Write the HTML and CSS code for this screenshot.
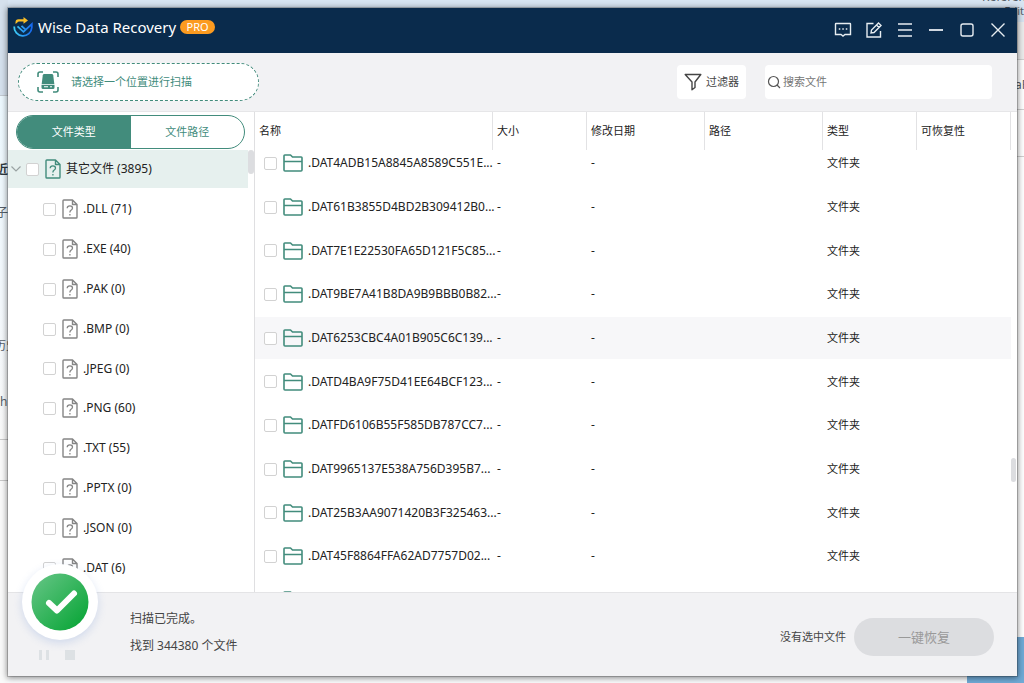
FILE: index.html
```html
<!DOCTYPE html>
<html lang="zh-CN">
<head>
<meta charset="utf-8">
<title>Wise Data Recovery</title>
<link rel="stylesheet" href="styles.css">
</head>
<body>
<svg class="defs" aria-hidden="true">
  <symbol id="folder" viewBox="0 0 20 18"><path d="M1 16V1.8Q1 1 1.8 1H7.5L9.5 3H18.2Q19 3 19 3.8V16Q19 17 18 17H2Q1 17 1 16ZM1 7.5H19" fill="none" stroke="currentColor" stroke-width="1.6" stroke-linejoin="round"/></symbol>
  <symbol id="file" viewBox="0 0 16 20"><path d="M1.8 1H10.5L15 5.5V18.2Q15 19 14.2 19H1.8Q1 19 1 18.2V1.8Q1 1 1.8 1ZM10.5 1V5.5H15" fill="none" stroke="currentColor" stroke-width="1.4" stroke-linejoin="round"/><path d="M5.2 9.2Q5.2 6.9 7.9 6.9Q10.5 6.9 10.5 9.1Q10.5 10.5 9 11.3Q7.9 12 7.9 13.4M7.9 15V16.4" fill="none" stroke="currentColor" stroke-width="1.3"/></symbol>
</svg>
<div class="desktop" aria-hidden="true">
  <div class="page-left"></div>
  <div class="page-right"></div>
  <div class="blue-tile"></div>
  <span class="peek peek-a">近</span>
  <span class="peek peek-b">子</span>
  <span class="peek peek-c">历史</span>
  <span class="peek peek-d">h</span>
  <span class="peek peek-e">References</span>
  <span class="peek peek-f">Edit</span>
  <span class="peek peek-g">aF</span>
</div>
<main class="window">
  <header class="titlebar">
    <svg class="logo" viewBox="0 0 20 20" width="20" height="20"><defs><linearGradient id="lg"><stop stop-color="#3fd0f7"/><stop offset="1" stop-color="#1668ed"/></linearGradient></defs><path d="M1.200 9.500A8.800 8.800 0 0 0 18.800 10.500V7L10.500 14.800L4.500 9.300M8.500 8.800L12.300 12.300" fill="none" stroke="url(#lg)" stroke-width="1.800"/><path d="M2.500 7V5.200Q2.500 2.200 5.500 2.200H10.500V0L15 3.400L10.500 6.800V4.600H6.200Q4.700 4.600 4.400 5.600Z" fill="#f8bd26"/></svg>
    <h1>Wise Data Recovery</h1><span class="badge">PRO</span>
    <div class="controls">
      <button aria-label="反馈"><svg viewBox="0 0 18 18"><path d="M2 2.5H16Q16.5 2.5 16.5 3V13.5H11L9 15L7 13.5H1.5V3Q1.5 2.5 2 2.5Z"/><path d="M4.8 8H6.3M8.3 8H9.8M11.8 8H13.3" stroke-width="1.6"/></svg></button>
      <button aria-label="注册"><svg viewBox="0 0 18 18"><path d="M8.5 2.5H2V16H15.5V10"/><path d="M6 12L6.5 9L13.5 2L16 4.5L9 11.5ZM11.5 4L14 6.5"/></svg></button>
      <button aria-label="菜单"><svg viewBox="0 0 18 18"><path d="M2 3H16M2 9H16M2 15H16"/></svg></button>
      <button aria-label="最小化"><svg viewBox="0 0 18 18"><path d="M2 9H16" stroke-width="1.8"/></svg></button>
      <button aria-label="最大化"><svg viewBox="0 0 18 18"><rect x="3" y="3" width="12" height="12" rx="2"/></svg></button>
      <button aria-label="关闭"><svg viewBox="0 0 18 18"><path d="M2.5 2.5L15.5 15.5M15.5 2.5L2.5 15.5"/></svg></button>
    </div>
  </header>
  <div class="toolbar">
    <button class="scan"><svg viewBox="0 0 22 22" width="22" height="22"><path d="M1 6V3Q1 1 3 1H6M16 1H19Q21 1 21 3V6M21 16V19Q21 21 19 21H16M6 21H3Q1 21 1 19V16" fill="none" stroke="currentColor" stroke-width="1.6"/><path d="M7.3 3H14.7Q16 3 16.2 4.2L17.3 13H4.7L5.8 4.2Q6 3 7.3 3Z" fill="currentColor"/><path fill-rule="evenodd" d="M4.500 13.700H17.500V16.500Q17.500 18 16 18H6Q4.500 18 4.500 16.500ZM7 15.300H11V16.300H7ZM13 15.300H15V16.300H13Z" fill="currentColor"/></svg>请选择一个位置进行扫描</button>
    <div class="tools">
      <button class="filter"><svg viewBox="0 0 18 18" width="18" height="18"><path d="M1.200 1.500H16.800L11 9V14.500L8 16.800V9Z" fill="none" stroke="#454545" stroke-width="1.400" stroke-linejoin="round"/></svg>过滤器</button>
      <label class="search"><svg viewBox="0 0 14 14" width="14" height="14"><circle cx="6.500" cy="6.500" r="5" fill="none" stroke="#555" stroke-width="1.200"/><path d="M10 10L13 13" stroke="#555" stroke-width="1.200"/></svg><input type="text" placeholder="搜索文件" aria-label="搜索文件"></label>
    </div>
  </div>
  <div class="content">
    <aside class="sidebar">
      <div class="tabs"><button class="active">文件类型</button><button>文件路径</button></div>
      <div class="tree-wrap">
      <ul class="tree">
        <li class="root"><svg class="chevron" viewBox="0 0 10 6" width="10" height="6"><path d="M.5 .5L5 5L9.500 .5" fill="none" stroke="#9aa3a3" stroke-width="1.200"/></svg><label><input type="checkbox"><svg class="file"><use href="#file"/></svg>其它文件 (3895)</label></li>
        <li><label><input type="checkbox"><svg class="file"><use href="#file"/></svg>.DLL (71)</label></li>
        <li><label><input type="checkbox"><svg class="file"><use href="#file"/></svg>.EXE (40)</label></li>
        <li><label><input type="checkbox"><svg class="file"><use href="#file"/></svg>.PAK (0)</label></li>
        <li><label><input type="checkbox"><svg class="file"><use href="#file"/></svg>.BMP (0)</label></li>
        <li><label><input type="checkbox"><svg class="file"><use href="#file"/></svg>.JPEG (0)</label></li>
        <li><label><input type="checkbox"><svg class="file"><use href="#file"/></svg>.PNG (60)</label></li>
        <li><label><input type="checkbox"><svg class="file"><use href="#file"/></svg>.TXT (55)</label></li>
        <li><label><input type="checkbox"><svg class="file"><use href="#file"/></svg>.PPTX (0)</label></li>
        <li><label><input type="checkbox"><svg class="file"><use href="#file"/></svg>.JSON (0)</label></li>
        <li><label><input type="checkbox"><svg class="file"><use href="#file"/></svg>.DAT (6)</label></li>
      </ul>
      <div class="thumb-left"></div>
      </div>
    </aside>
    <section class="files">
      <table>
        <colgroup><col><col class="c-size"><col class="c-date"><col class="c-path"><col class="c-type"><col class="c-state"></colgroup>
        <thead><tr><th>名称</th><th>大小</th><th>修改日期</th><th>路径</th><th>类型</th><th>可恢复性</th></tr></thead>
        <tbody>
          <tr><td><label><input type="checkbox"><svg class="folder"><use href="#folder"/></svg>.DAT4ADB15A8845A8589C551E...</label></td><td>-</td><td>-</td><td></td><td>文件夹</td><td></td></tr>
          <tr><td><label><input type="checkbox"><svg class="folder"><use href="#folder"/></svg>.DAT61B3855D4BD2B309412B0...</label></td><td>-</td><td>-</td><td></td><td>文件夹</td><td></td></tr>
          <tr><td><label><input type="checkbox"><svg class="folder"><use href="#folder"/></svg>.DAT7E1E22530FA65D121F5C85...</label></td><td>-</td><td>-</td><td></td><td>文件夹</td><td></td></tr>
          <tr><td><label><input type="checkbox"><svg class="folder"><use href="#folder"/></svg>.DAT9BE7A41B8DA9B9BBB0B82...</label></td><td>-</td><td>-</td><td></td><td>文件夹</td><td></td></tr>
          <tr class="hover"><td><label><input type="checkbox"><svg class="folder"><use href="#folder"/></svg>.DAT6253CBC4A01B905C6C139...</label></td><td>-</td><td>-</td><td></td><td>文件夹</td><td></td></tr>
          <tr><td><label><input type="checkbox"><svg class="folder"><use href="#folder"/></svg>.DATD4BA9F75D41EE64BCF123...</label></td><td>-</td><td>-</td><td></td><td>文件夹</td><td></td></tr>
          <tr><td><label><input type="checkbox"><svg class="folder"><use href="#folder"/></svg>.DATFD6106B55F585DB787CC7...</label></td><td>-</td><td>-</td><td></td><td>文件夹</td><td></td></tr>
          <tr><td><label><input type="checkbox"><svg class="folder"><use href="#folder"/></svg>.DAT9965137E538A756D395B7...</label></td><td>-</td><td>-</td><td></td><td>文件夹</td><td></td></tr>
          <tr><td><label><input type="checkbox"><svg class="folder"><use href="#folder"/></svg>.DAT25B3AA9071420B3F325463...</label></td><td>-</td><td>-</td><td></td><td>文件夹</td><td></td></tr>
          <tr><td><label><input type="checkbox"><svg class="folder"><use href="#folder"/></svg>.DAT45F8864FFA62AD7757D02...</label></td><td>-</td><td>-</td><td></td><td>文件夹</td><td></td></tr>
          <tr><td><label><input type="checkbox" aria-label="文件夹"><svg class="folder"><use href="#folder"/></svg></label></td><td></td><td></td><td></td><td></td><td></td></tr>
        </tbody>
      </table>
      <div class="thumb-right"></div>
    </section>
  </div>
  <footer class="status">
    <div class="done"><svg viewBox="0 0 58 58" width="58" height="58"><defs><linearGradient id="gg" x1="0" y1="0" x2="1" y2="1"><stop stop-color="#68c688"/><stop offset="1" stop-color="#02a331"/></linearGradient></defs><circle cx="29" cy="29" r="28.500" fill="url(#gg)"/><path d="M18 30L26 37.500L43 20.500" fill="none" stroke="#fff" stroke-width="6" stroke-linecap="round" stroke-linejoin="round"/></svg></div>
    <div class="scan-controls">
      <button aria-label="暂停" disabled><svg viewBox="0 0 10 10" width="10" height="10"><path d="M0 0H3V10H0ZM7 0H10V10H7Z" fill="#dde1e4"/></svg></button>
      <button aria-label="停止" disabled><svg viewBox="0 0 10 10" width="10" height="10"><path d="M0 0H10V10H0Z" fill="#dde1e4"/></svg></button>
    </div>
    <div class="summary"><p>扫描已完成。</p><p>找到 344380 个文件</p></div>
    <div class="recover"><span>没有选中文件</span><button disabled>一键恢复</button></div>
  </footer>
</main>
</body>
</html>
```
FILE: styles.css
```css
* { box-sizing: border-box; }
body {
  margin: 0;
  height: 100vh;
  padding: 8px 7px 7px 8px;
  overflow: hidden;
  background: #fafbfc;
  color: #222;
  font: 12px/16px "Noto Sans", "Noto Sans CJK SC", sans-serif;
}
button { border: 0; padding: 0; background: none; color: inherit; font: inherit; }
input[type="checkbox"] {
  appearance: none;
  flex: none;
  width: 13px;
  height: 13px;
  margin: 0;
  border: 1px solid #d2d2d2;
  border-radius: 2px;
  background: #fff;
}
.defs { position: absolute; width: 0; height: 0; }

/* desktop behind the window */
.desktop {
  position: absolute;
  inset: 0;
  overflow: hidden;
  background: linear-gradient(#d8e5f2 22px, #fafbfc 22px);
}
.page-left {
  position: absolute;
  left: 0; top: 0; bottom: 0;
  width: 8px;
  background: linear-gradient(#d5e1ed 95px, #c3cad1 95px 96px, #edf9ff 96px, #f4f9fd 300px, #fafafa 439px, #c9c9c9 439px 440px, #fafafa 440px 480px, #c9c9c9 480px 481px, #fafafa 481px);
}
.page-right {
  position: absolute;
  right: 0; top: 22px; bottom: 0;
  width: 7px;
  background: linear-gradient(#ececec 37px, #d0d0d0 37px 38px, #fff 38px 87px, #d0d0d0 87px 88px, #fff 88px 134px, #d0d0d0 134px 135px, #fff 135px);
}
.blue-tile {
  position: absolute;
  right: 0; bottom: 0;
  width: 57px;
  height: 46px;
  background: #70aad6;
}
.peek { position: absolute; white-space: nowrap; color: #555e68; }
.peek-a { left: -4px; top: 162px; font-weight: bold; color: #303840; }
.peek-b { left: -4px; top: 205px; }
.peek-c { left: -6px; top: 338px; }
.peek-d { left: 0; top: 394px; }
.peek-e { left: 982px; top: -11px; }
.peek-f { right: 0; top: 3px; font-size: 11px; }
.peek-g { left: calc(100% - 9px); top: 77px; }

.window {
  position: relative;
  display: flex;
  flex-direction: column;
  height: 100%;
  background: #fff;
  box-shadow: 0 0 0 1px rgba(0, 0, 0, .18), 0 1px 6px 1px rgba(0, 0, 0, .45);
}
.titlebar {
  display: flex;
  flex: none;
  height: 45px;
  padding: 0 4px 8px 5px;
  align-items: center;
  background: #0a2b4c;
  color: #fff;
}
.titlebar h1 { margin: 0 4px 0 5px; font-size: 15px; line-height: 20px; font-weight: 400; }
.badge {
  width: 35px;
  height: 14px;
  border-radius: 7px;
  background: #fc9b20;
  text-align: center;
  font-size: 11px;
  line-height: 14px;
}
.controls { display: flex; margin-left: auto; padding-top: 7px; }
.controls button { width: 31px; height: 18px; }
.controls svg { display: block; width: 18px; height: 18px; margin: auto; fill: none; stroke: #e7edf1; stroke-width: 1.4; }

.toolbar {
  display: flex;
  flex: none;
  justify-content: space-between;
  align-items: center;
  height: 59px;
  padding: 0 25px 0 10px;
  border-bottom: 1px solid #e6e6e8;
  background: #f2f2f4;
  font-size: 11px;
}
.scan {
  display: flex;
  align-items: center;
  gap: 12px;
  width: 241px;
  height: 38px;
  padding-left: 18px;
  border: 1px dashed #428c7c;
  border-radius: 19px;
  background: #fff;
  color: #428c7c;
}
.tools { display: flex; gap: 19px; }
.filter, .search { display: flex; align-items: center; height: 34px; border-radius: 4px; background: #fff; }
.filter { width: 69px; padding-left: 7px; gap: 4px; color: #444; }
.search { width: 227px; padding-left: 2px; gap: 2px; }
.search input { flex: 1; min-width: 0; padding: 0; border: 0; outline: 0; background: none; font: inherit; }
.search input::placeholder { color: #757575; }

.content { display: flex; flex: 1; min-height: 0; }
.sidebar {
  display: flex;
  flex-direction: column;
  flex: none;
  width: 247px;
  border-right: 1px solid #dfdfe1;
}
.tabs {
  display: flex;
  flex: none;
  height: 34px;
  margin: 3px 9px 1px 8px;
  overflow: hidden;
  border: 1px solid #428c7c;
  border-radius: 17px;
  color: #428c7c;
  font-size: 11px;
}
.tabs button { flex: 1; }
.tabs .active { background: #428c7c; color: #fff; }
.tree-wrap { position: relative; flex: 1; min-height: 0; overflow: hidden; }
.tree { margin: 0; padding: 0; list-style: none; }
.tree li { display: flex; align-items: center; height: 40px; padding-left: 35px; }
.tree li:nth-child(6n) { height: 39px; }
.tree label { display: flex; align-items: center; }
.tree .root {
  height: 38px;
  margin: 0 6px 1px 0;
  padding-left: 3px;
  gap: 5px;
  background: #e6f0ee;
}
.file { flex: none; width: 16px; height: 20px; margin: 0 5px 0 6px; color: #858585; }
.root .file { color: #428c7c; }
.thumb-left { position: absolute; right: 0; top: 0; width: 6px; height: 24px; border-radius: 3px; background: #dcdde0; }

.files { position: relative; flex: 1; min-width: 0; overflow: hidden; padding-right: 6px; }
table { width: 100%; border-collapse: separate; border-spacing: 0; table-layout: fixed; }
.c-size, .c-type { width: 94px; }
.c-date, .c-path { width: 118px; }
.c-state { width: 94px; }
th, td { padding: 0 0 0 4px; text-align: left; white-space: nowrap; }
th { height: 38px; border-right: 1px solid #e2e2e4; font-size: 11px; font-weight: 400; }
td { height: 44px; }
tr:nth-child(3n) td { height: 43px; }
tbody tr:first-child td { height: 35px; padding-bottom: 9px; }
td:nth-child(5) { font-size: 11px; }
.hover td { background: #f7f7f9; border-block: 1px solid #fff; }
td label { display: flex; align-items: center; padding-left: 5px; }
.folder { flex: none; width: 20px; height: 18px; margin: 0 5px 0 6px; color: #428c7c; }
.thumb-right { position: absolute; right: 1px; top: 346px; width: 5px; height: 24px; border-radius: 3px; background: #dcdde0; }

.status {
  position: relative;
  display: flex;
  flex: none;
  height: 84px;
  padding-right: 23px;
  border-top: 1px solid #e4e4e6;
  background: #f2f2f4;
  color: #444;
}
.done {
  position: absolute;
  left: 14px;
  top: -29px;
  display: grid;
  place-items: center;
  width: 76px;
  height: 76px;
  border-radius: 50%;
  background: #fff;
  box-shadow: 0 3px 8px rgba(90, 130, 210, .22);
}
.scan-controls { display: flex; gap: 16px; width: 122px; padding: 57px 0 0 31px; }
.scan-controls button, .scan-controls svg { display: block; height: 10px; }
.summary { padding-top: 18px; }
.summary p { margin: 0 0 11px; }
.recover { display: flex; align-items: center; gap: 8px; margin-left: auto; padding-top: 5px; font-size: 11px; }
.recover button { width: 140px; height: 38px; border-radius: 19px; background: #dcdde0; color: #999; font-size: 13px; }
```
